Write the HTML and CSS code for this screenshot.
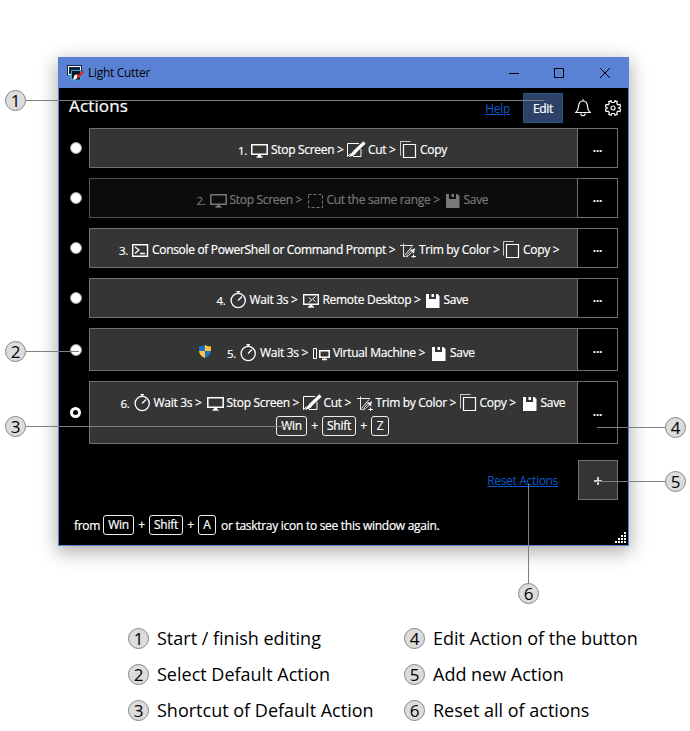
FILE: index.html
```html
<!DOCTYPE html>
<html lang="en">
<head>
<meta charset="utf-8">
<title>Light Cutter</title>
<link rel="stylesheet" href="styles.css">
</head>
<body>
<svg class="defs" xmlns="http://www.w3.org/2000/svg">
  <symbol id="screen" viewBox="0 0 24 24"><path d="M4.800 5.800h15.400v9.400H4.800z" stroke-width="1.500"/><path d="M9.500 18h6" stroke-width="1.400"/><path d="M12.500 15.500v2.500" stroke-width="3"/></symbol>
  <symbol id="cut" viewBox="0 0 24 24"><path d="M15 4.500H3.500v13M3.500 17.500l3-3M9 17.500h8V10"/><path d="M20.500 3.500L10.500 13" stroke-width="3.200"/><path d="M9.300 11.700l2.800 2.800-3 2.300-4.500 1.200z" fill="currentColor" stroke="none"/></symbol>
  <symbol id="copy" viewBox="0 0 24 24"><path d="M4.500 16.500v-14H14.500" stroke-opacity=".75"/><path d="M7.500 5.500h12v13h-12z" stroke-width="1.200"/></symbol>
  <symbol id="range" viewBox="0 0 24 24"><path d="M5.500 5.500h14v13h-14z" stroke-dasharray="3 2"/></symbol>
  <symbol id="save" viewBox="0 0 24 24"><path d="M6 5h3v5h7V5h1.500l2 2v12H6z" fill="currentColor" stroke="none"/><path d="M11.500 5h2.500v3h-2.500z" fill="currentColor" stroke="none"/></symbol>
  <symbol id="console" viewBox="0 0 24 24"><path d="M4.700 5.700h14.800v11.600H4.700z" stroke-width="1.400"/><path d="M7 8l4 3-4 3.500M12 14.500h5" stroke-width="1.300"/></symbol>
  <symbol id="trim" viewBox="0 0 24 24"><path d="M5 6.500h13M8.500 4.500v13h2M9.500 16.500L17 7.500" stroke-width=".9"/><path d="M11.500 18l1-2.500 4-4.500 1.500 1.500-4.500 4z" stroke-width=".8"/><path d="M15.800 10.500l3.400 3.200M17.500 12.200l2.200-2.500" stroke-width="1.700"/><path d="M16.500 17.500h4.500M18.500 15.500v3.500"/></symbol>
  <symbol id="timer" viewBox="0 0 24 24"><circle cx="12.200" cy="11.500" r="7.100" stroke-width="1.300"/><path d="M12 11.500l4-4M12.200 2v2.500M10.500 2.600h3.400" stroke-width="1.300"/></symbol>
  <symbol id="remote" viewBox="0 0 24 24"><path d="M4.700 5.700h14.600v9.600H4.700z" stroke-width="1.400"/><path d="M9 18h6" stroke-width="1.400"/><path d="M12 15.500V18" stroke-width="3"/><path d="M9.800 8.500l3 2.500-3 2.500M16.500 7.500l-3 2.500 3 2.500"/></symbol>
  <symbol id="vm" viewBox="0 0 24 24"><path d="M4.500 6.500h3v10h-3z"/><path d="M10.800 8.800h9.400v6.400h-9.400z" stroke-width="1.500"/><path d="M13 17.500h5M15.500 15v2.500" stroke-width="1.400"/></symbol>
</svg>

<main class="stage">
  <section class="window">
    <header class="titlebar">
      <svg class="app-icon" viewBox="0 0 17 17"><path d="M1.500 1.500h12v8h-12z" fill="#17243f" stroke="#fff"/><path d="M.5 10.500V.5h14v9" fill="none" stroke="#080c15" stroke-width=".8"/><path d="M4.500 5.500h9v9.500h-9z" fill="#10151f" stroke="#2aa9df"/><path d="M4.500 14.500l2-1 1-3.500 3-.5v3l-2 2z" fill="#fff"/><path d="M16 6.500l-5.500 6.500" stroke="#d42a20" stroke-width="2.500"/></svg>
      <span class="app-name">Light Cutter</span>
      <svg class="controls" viewBox="0 0 104 12" fill="none" stroke="#000"><path d="M0 6.500h10M45.500 1.500h9v9h-9zM91 1l10 10M101 1L91 11"/></svg>
    </header>

    <div class="toolbar">
      <h1>Actions</h1>
      <a class="link help">Help</a>
      <button class="edit">Edit</button>
      <svg class="bell" viewBox="0 0 16 18" fill="none" stroke="#fff" stroke-width="1.200"><path d="M.8 13.500c2-1.500 2.500-2.500 2.700-6C3.700 4 5 2 8 2s4.300 2 4.500 5.500c.2 3.500.7 4.500 2.700 6zM8 .2V2M5.800 14.500c.2 3 4.200 3 4.400 0"/></svg>
      <svg class="gear" viewBox="0 0 16 16" fill="none" stroke="#fff" stroke-width="1.200"><path d="M6.700 2.500 6 .7 3.800 1.600 4.200 3.700 2.900 4.800.9 4.400.6 7 2.400 8 .6 9 .9 11.600 2.900 11.200 4.200 12.300 3.800 14.400 6 15.300 6.700 13.500H9.300L10 15.300 12.200 14.400 11.800 12.300 13.100 11.200 15.100 11.600 15.400 9 13.600 8 15.400 7 15.100 4.400 13.100 4.800 11.800 3.700 12.200 1.600 10 .7 9.300 2.500z"/><circle cx="8" cy="8" r="2"/></svg>
    </div>

    <div class="actions">
      <div class="action">
        <i class="radio"></i>
        <div class="card"><div class="steps"><b class="no">1.</b><svg><use href="#screen"/></svg><span class="stop">Stop Screen &gt;</span><svg><use href="#cut"/></svg><span class="cut">Cut &gt;</span><svg><use href="#copy"/></svg><span class="copy-end">Copy</span></div></div>
        <button class="more">...</button>
      </div>
      <div class="action disabled">
        <i class="radio"></i>
        <div class="card"><div class="steps"><b class="no">2.</b><svg><use href="#screen"/></svg><span class="stop">Stop Screen &gt;</span><svg><use href="#range"/></svg><span class="range">Cut the same range &gt;</span><svg><use href="#save"/></svg><span class="save">Save</span></div></div>
        <button class="more">...</button>
      </div>
      <div class="action long">
        <i class="radio"></i>
        <div class="card"><div class="steps"><b class="no">3.</b><svg><use href="#console"/></svg><span class="console">Console of PowerShell or Command Prompt &gt;</span><svg><use href="#trim"/></svg><span class="trim">Trim by Color &gt;</span><svg><use href="#copy"/></svg><span class="copy">Copy &gt;</span></div></div>
        <button class="more">...</button>
      </div>
      <div class="action">
        <i class="radio"></i>
        <div class="card"><div class="steps"><b class="no">4.</b><svg><use href="#timer"/></svg><span class="wait">Wait 3s &gt;</span><svg><use href="#remote"/></svg><span class="remote">Remote Desktop &gt;</span><svg><use href="#save"/></svg><span class="save">Save</span></div></div>
        <button class="more">...</button>
      </div>
      <div class="action admin">
        <i class="radio"></i>
        <div class="card"><div class="steps"><svg class="shield" viewBox="0 0 14 15"><path d="M7 1C5 2 3 2.500 1 2.500V7h6z" fill="#1673c9"/><path d="M7 1c2 1 4 1.500 6 1.500V7H7z" fill="#ffc43c"/><path d="M1 7c.3 3.500 3 6 6 7V7z" fill="#ffc43c"/><path d="M13 7c-.3 3.500-3 6-6 7V7z" fill="#1673c9"/></svg><b class="no">5.</b><svg><use href="#timer"/></svg><span class="wait">Wait 3s &gt;</span><svg><use href="#vm"/></svg><span class="vm">Virtual Machine &gt;</span><svg><use href="#save"/></svg><span class="save">Save</span></div></div>
        <button class="more">...</button>
      </div>
      <div class="action default">
        <i class="radio checked"></i>
        <div class="card">
          <div class="steps"><b class="no">6.</b><svg><use href="#timer"/></svg><span class="wait">Wait 3s &gt;</span><svg><use href="#screen"/></svg><span class="stop">Stop Screen &gt;</span><svg><use href="#cut"/></svg><span class="cut">Cut &gt;</span><svg><use href="#trim"/></svg><span class="trim">Trim by Color &gt;</span><svg><use href="#copy"/></svg><span class="copy">Copy &gt;</span><svg><use href="#save"/></svg><span class="save">Save</span></div>
          <div class="keys"><kbd class="win">Win</kbd><span>+</span><kbd class="shift">Shift</kbd><span>+</span><kbd class="letter">Z</kbd></div>
        </div>
        <button class="more">...</button>
      </div>
    </div>

    <div class="manage"><a class="link">Reset Actions</a><button class="add"><svg viewBox="0 0 10 10" stroke="#fff" stroke-width="1.500"><path d="M1 5h8M5 1v8"/></svg></button></div>

    <footer class="hint"><span class="from">from</span><div class="keys"><kbd class="win">Win</kbd><span>+</span><kbd class="shift">Shift</kbd><span>+</span><kbd class="letter">A</kbd></div><span class="again">or tasktray icon to see this window again.</span>
      <svg class="grip" viewBox="0 0 12 12" fill="#fff"><path d="M10 1h2v2h-2zM7 4h2v2H7zM10 4h2v2h-2zM4 7h2v2H4zM7 7h2v2H7zM10 7h2v2h-2zM1 10h2v2H1zM4 10h2v2H4zM7 10h2v2H7zM10 10h2v2h-2z"/></svg>
    </footer>
  </section>

  <section class="legend">
    <div><i class="num">1</i>Start / finish editing</div>
    <div><i class="num">4</i>Edit Action of the button</div>
    <div><i class="num">2</i>Select Default Action</div>
    <div><i class="num">5</i>Add new Action</div>
    <div><i class="num">3</i>Shortcut of Default Action</div>
    <div><i class="num">6</i>Reset all of actions</div>
  </section>

  <svg class="leaders" viewBox="0 0 690 731" stroke="#7f7f7f"><path d="M26 100.500H544M26 351.500H79M26 426.500H293M597 427.500H665M597 481.500H665M528.500 484V583"/></svg>
  <i class="num pin p1">1</i>
  <i class="num pin p2">2</i>
  <i class="num pin p3">3</i>
  <i class="num pin p4">4</i>
  <i class="num pin p5">5</i>
  <i class="num pin p6">6</i>
</main>
</body>
</html>
```
FILE: styles.css
```css
* { box-sizing: border-box; }
body { margin: 0; background: #fff; }
i, b { font-style: normal; font-weight: 400; }
.defs { position: absolute; width: 0; height: 0; }
.stage { position: relative; width: 690px; height: 731px; padding: 57px 0 0 58px; overflow: hidden; }

.window {
  width: 571px; height: 489px;
  display: flex; flex-direction: column;
  background: #000; color: #fff;
  border: 1px solid #5a82d4;
  box-shadow: 0 5px 18px 1px rgba(0, 0, 0, .33);
  font: 12px/16px "Open Sans", "Noto Sans", sans-serif;
  letter-spacing: -.3px;
  -webkit-text-stroke: .2px currentColor;
  white-space: nowrap;
}
.titlebar { height: 30px; flex: none; display: flex; align-items: center; background: #5a82d4; color: #000; padding-left: 8px; -webkit-text-stroke: 0; }
.app-icon { width: 17px; height: 17px; margin-right: 4px; }
.controls { width: 104px; height: 12px; margin: 0 15px 0 auto; }

.toolbar { height: 40px; flex: none; display: flex; padding: 5px 7px 0 10px; }
h1 { margin: 1px auto 0 0; font-size: 17px; line-height: 23px; font-weight: 400; letter-spacing: .15px; }
.link { color: #0a5ccc; text-decoration: underline; -webkit-text-stroke: 0; }
.help { margin: 8px 13px 0 0; }
button { display: block; padding: 0; font: inherit; letter-spacing: inherit; color: #fff; border: 1px solid #707070; border-radius: 0; background: #000; }
.edit { width: 40px; height: 30px; padding-top: 1px; background: #2e4269; border-color: #265580; margin-right: 12px; }
.bell { width: 16px; height: 18px; margin: 6px 14px 0 0; }
.gear { width: 16px; height: 16px; margin-top: 7px; }

.actions { display: flex; flex-direction: column; gap: 10px; }
.action { display: flex; height: 40px; padding-right: 10px; }
.radio { flex: none; align-self: center; width: 12px; height: 12px; margin: 0 7px 0 11px; border-radius: 50%; background: #fff; border: 1px solid #999; }
.checked { width: 11px; height: 11px; margin-right: 8px; background: #000; border: 3px solid #fff; }
.card { flex: 1; padding-top: 10px; background: #353535; border: 1px solid #707070; }
.steps { display: flex; justify-content: center; align-items: flex-start; height: 24px; padding-left: 19px; line-height: 22px; }
.steps svg { width: 24px; height: 24px; flex: none; fill: none; stroke: currentColor; }
.no { width: 9px; flex: none; font-size: 11.500px; line-height: 24px; }
.more { width: 41px; margin-left: -1px; font-weight: 700; padding-bottom: 1px; -webkit-text-stroke: 0; }
.action.disabled .card { background: #0c0c0c; border-color: #505050; color: #787878; }
.action.long .steps { padding-left: 12px; }
.action.admin { height: 43px; }
.action.admin .steps { padding-left: 7px; }
.admin .card { padding-top: 13px; }
.steps .shield { width: 14px; height: 15px; margin: 2px 15px 0 0; stroke: none; }
.default { height: 63px; }
.default .card { padding-top: 10px; }
.stop { width: 73px; }
.cut { width: 28px; }
.copy { width: 37px; }
.copy-end { width: 28px; }
.range { width: 113px; }
.save { width: 26px; }
.console { width: 243px; letter-spacing: -.32px; }
.trim { width: 80px; }
.wait { width: 49px; }
.remote { width: 97px; }
.vm { width: 93px; }
.default .steps { padding-left: 20px; }

.keys { display: flex; justify-content: center; align-items: center; height: 20px; }
.default .keys { padding-right: 2px; }
.keys span { width: 15px; text-align: center; }
kbd { height: 20px; border: 1px solid #eee; border-radius: 3px; font: inherit; line-height: 18px; text-align: center; }
.win { width: 31px; }
.shift { width: 34px; }
.letter { width: 18px; }

.manage { height: 56px; flex: none; padding: 16px 10px 0 0; display: flex; justify-content: flex-end; }
.manage .link { margin: 13px 20px 0 0; letter-spacing: -.32px; }
.add { width: 40px; height: 40px; padding-top: 1px; background: #353535; }
.add svg { width: 10px; height: 10px; display: block; margin: auto; }

.hint { flex: 1; display: flex; padding: 15px 2px 0 15px; line-height: 22px; }
.from { width: 29px; }
.hint .keys { margin-right: 5px; line-height: 20px; }
.again { letter-spacing: -.28px; }
.grip { width: 12px; height: 12px; margin: 16px 0 0 auto; }

.num {
  display: block; flex: none; width: 21px; height: 21px;
  border: 1px solid #858585; border-radius: 50%; background: #dcdcdc; color: #000;
  font: 17px/19px "Open Sans", sans-serif; text-align: center;
}
.legend {
  display: grid; grid-template-columns: 276px 220px; grid-auto-rows: 36px;
  margin: 74px 0 0 70px;
  font: 18px/36px "Open Sans", sans-serif; color: #000;
  white-space: nowrap;
}
.legend div { display: flex; align-items: center; gap: 8px; }

.leaders { position: absolute; left: 0; top: 0; width: 690px; height: 731px; fill: none; }
.pin { position: absolute; }
.p1 { left: 5px; top: 90px; }
.p2 { left: 5px; top: 341px; }
.p3 { left: 5px; top: 416px; }
.p4 { left: 665px; top: 417px; }
.p5 { left: 665px; top: 471px; }
.p6 { left: 518px; top: 583px; }
```
